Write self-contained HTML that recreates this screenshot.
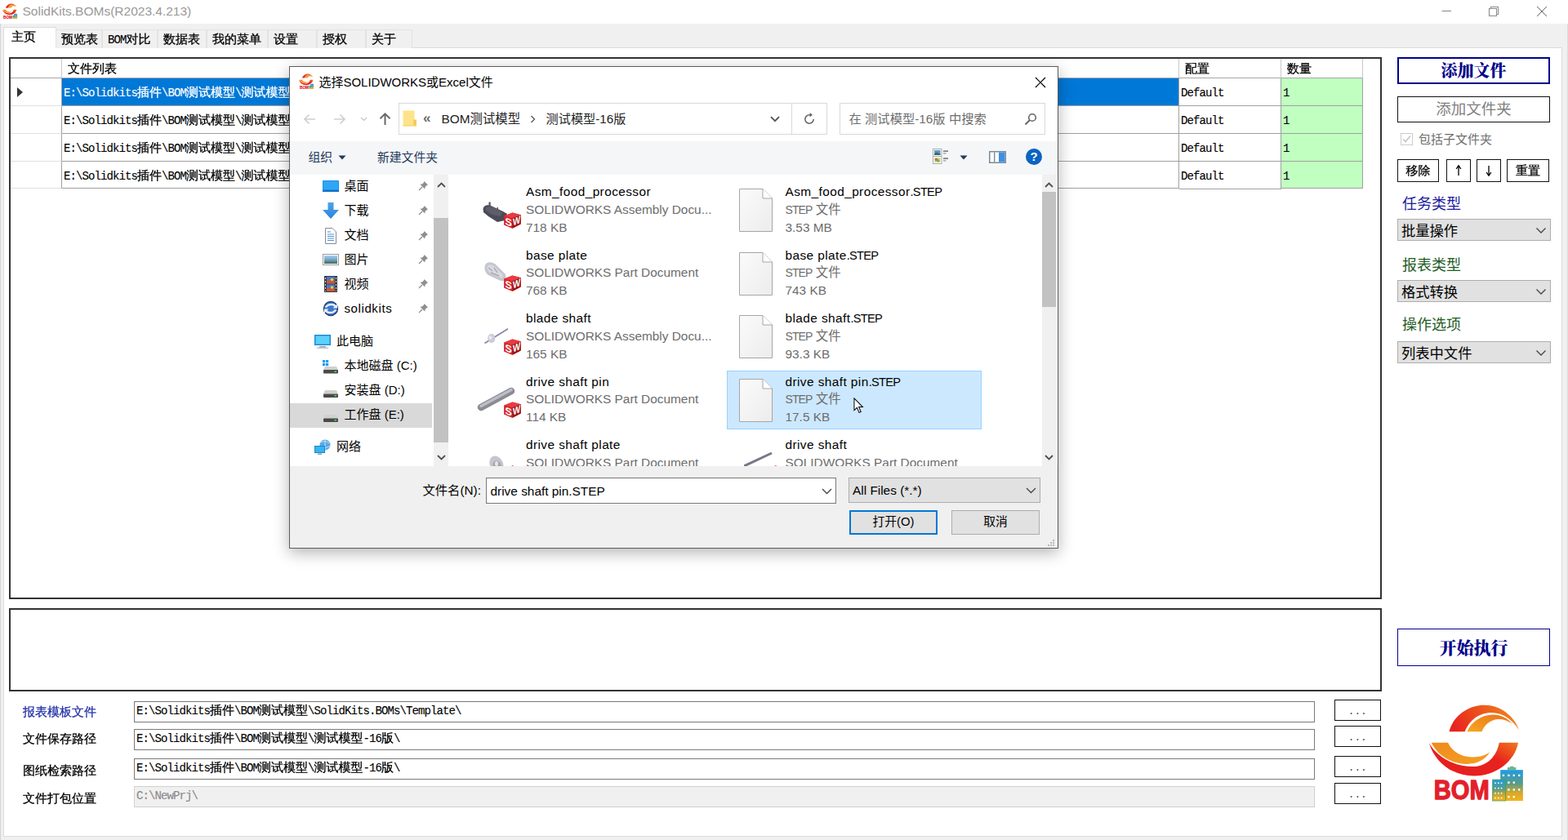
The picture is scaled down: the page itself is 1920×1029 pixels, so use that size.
<!DOCTYPE html>
<html lang="zh-CN">
<head>
<meta charset="utf-8">
<title>SolidKits.BOMs(R2023.4.213)</title>
<style>
*{box-sizing:border-box;margin:0;padding:0}
html,body{width:1920px;height:1029px;overflow:hidden;background:#f0f0f0}
body{position:relative;font-family:"Liberation Sans","Noto Sans CJK SC",sans-serif;font-size:16px;color:#000}
.abs{position:absolute}
.sim{font-family:"Liberation Mono","WenQuanYi Zen Hei","Noto Sans CJK SC",monospace;font-size:15px;white-space:nowrap;-webkit-text-stroke:0.3px currentColor}
.sim b{-webkit-text-stroke:0.12px currentColor;font-weight:normal;font-size:14px;letter-spacing:-0.9px;font-family:"Liberation Mono",monospace}
.ui{font-family:"Liberation Sans","Noto Sans CJK SC",sans-serif}
/* title bar */
#titlebar{left:0;top:0;width:1920px;height:29px;background:#fff}
#title{left:27.5px;top:5px;font-size:15.5px;line-height:18px;color:#999;white-space:nowrap}
/* tabs */
.tab{top:36px;height:23px;background:#f0f0f0;border:1px solid #e3e3e3;border-bottom:none;font-size:15px;line-height:25px;padding-left:6px;white-space:nowrap;overflow:hidden}
#tabpage{left:4px;top:58px;width:1909px;height:967px;background:#fff;border:1px solid #dcdcdc}
#tab0{left:4px;top:33px;width:65px;height:26px;background:#fff;border:1px solid #dcdcdc;border-bottom:none;font-size:15px;line-height:26px;padding-left:9px;overflow:hidden}
/* grid */
.panel{border:2px solid #333;background:#fff}
.gh{top:72px;height:24px;background:#fff;border-right:1px solid #c8c8c8;border-bottom:1px solid #a6a6a6;font-size:15px;line-height:27px;padding-left:7px;overflow:hidden}
.cell{height:34px;border-right:1px solid #a0a0a0;border-bottom:1px solid #a0a0a0;line-height:36px;padding-left:2px;overflow:hidden}
.btn{border:1px solid #111;background:#fff;text-align:center;white-space:nowrap}
.combo{left:1711px;width:188px;height:27px;background:#e1e1e1;border:1px solid #adadad;font-size:17.3px;line-height:28px;padding-left:4px;overflow:hidden}
.combo svg{position:absolute;right:4px;top:9px}
.lbl{font-size:18px;white-space:nowrap}
.pathlbl{left:28px;font-size:15px;white-space:nowrap}
.pathin{left:164px;width:1446px;height:26px;border:1px solid #7a7a7a;background:#fff;line-height:22px;padding-left:2px}
.dots{left:1634px;width:57px;height:26px;border:1px solid #111;background:#fff;text-align:center;font-size:12px;line-height:28px;letter-spacing:0.5px;color:#444;-webkit-text-stroke:0}

/* dialog */
#dlg{left:354px;top:81px;width:942px;height:591px;background:#fff;border:1px solid #5c5c5c;box-shadow:0 5px 18px 0 rgba(0,0,0,.30);font-family:"Liberation Sans","Noto Sans CJK SC",sans-serif;font-size:15px;color:#000}
#dlg .t{position:absolute;white-space:nowrap;line-height:20px}
#dlg .nv{position:absolute;left:66px;white-space:nowrap;line-height:20px;font-size:15px}
#dlg .fn{position:absolute;white-space:nowrap;line-height:20px;font-size:15.4px;color:#000}
#dlg .fd{position:absolute;white-space:nowrap;line-height:20px;font-size:15.4px;color:#6d6d6d}
.pin{position:absolute;left:157px}
#dlg .ext{letter-spacing:-.7px;font-size:14.6px}
#dlg .stp{letter-spacing:-.9px;font-size:14px}
</style>
</head>
<body>
<!-- ===== main window ===== -->
<div id="titlebar" class="abs"></div>
<div class="abs" style="left:0;top:29px;width:1px;height:1000px;background:#d4d4d4"></div><div class="abs" style="left:1919px;top:29px;width:1px;height:1000px;background:#dcdcdc"></div>
<div id="title" class="abs ui">SolidKits.BOMs(R2023.4.213)</div>
<div id="tabpage" class="abs"></div>
<div id="tab0" class="abs sim">主页</div>
<div class="abs tab sim" style="left:68px;width:57px">预览表</div>
<div class="abs tab sim" style="left:125px;width:68px"><b>BOM</b>对比</div>
<div class="abs tab sim" style="left:193px;width:60px">数据表</div>
<div class="abs tab sim" style="left:253px;width:75px">我的菜单</div>
<div class="abs tab sim" style="left:328px;width:60px">设置</div>
<div class="abs tab sim" style="left:388px;width:60px">授权</div>
<div class="abs tab sim" style="left:448px;width:57px">关于</div>


<!-- window controls -->
<svg class="abs" style="left:1760px;top:4px" width="140" height="20" viewBox="0 0 140 20"><path d="M5.5 9.5 H17" stroke="#8c8c8c" stroke-width="1.1"/><path d="M63.5 6.5 H72.5 V15.5 H63.5 Z M65.5 6.5 V4.5 H74.5 V13.5 H72.5" fill="none" stroke="#8c8c8c" stroke-width="1.1"/><path d="M122 4 L134 16 M134 4 L122 16" stroke="#666" stroke-width="1"/></svg>
<!-- grid panel -->
<div class="abs panel" style="left:11px;top:70px;width:1681px;height:664px"></div>
<div class="abs gh" style="left:13px;width:63px"></div>
<div class="abs gh sim" style="left:76px;width:1368px">文件列表</div>
<div class="abs gh sim" style="left:1444px;width:125px">配置</div>
<div class="abs gh sim" style="left:1569px;width:100px">数量</div>
<div class="abs cell" style="left:13px;top:96px;width:63px;border-bottom-color:#e0e0e0;border-right-color:#a0a0a0"></div>
<div class="abs cell sim" style="left:76px;top:96px;width:1368px;background:#0078d7;color:#fff;"><b>E:\Solidkits</b>插件<b>\BOM</b>测试模型<b>\</b>测试模型</div>
<div class="abs cell sim" style="left:1444px;top:96px;width:125px"><b>Default</b></div>
<div class="abs cell sim" style="left:1569px;top:96px;width:100px;background:#c0ffc0"><b>1</b></div>
<div class="abs cell" style="left:13px;top:130px;width:63px;border-bottom-color:#e0e0e0;border-right-color:#a0a0a0"></div>
<div class="abs cell sim" style="left:76px;top:130px;width:1368px;"><b>E:\Solidkits</b>插件<b>\BOM</b>测试模型<b>\</b>测试模型</div>
<div class="abs cell sim" style="left:1444px;top:130px;width:125px"><b>Default</b></div>
<div class="abs cell sim" style="left:1569px;top:130px;width:100px;background:#c0ffc0"><b>1</b></div>
<div class="abs cell" style="left:13px;top:164px;width:63px;border-bottom-color:#e0e0e0;border-right-color:#a0a0a0"></div>
<div class="abs cell sim" style="left:76px;top:164px;width:1368px;"><b>E:\Solidkits</b>插件<b>\BOM</b>测试模型<b>\</b>测试模型</div>
<div class="abs cell sim" style="left:1444px;top:164px;width:125px"><b>Default</b></div>
<div class="abs cell sim" style="left:1569px;top:164px;width:100px;background:#c0ffc0"><b>1</b></div>
<div class="abs cell" style="left:13px;top:198px;width:63px;height:33px;border-bottom-color:#e0e0e0;border-right-color:#a0a0a0"></div>
<div class="abs cell sim" style="left:76px;top:198px;width:1368px;height:33px;"><b>E:\Solidkits</b>插件<b>\BOM</b>测试模型<b>\</b>测试模型</div>
<div class="abs cell sim" style="left:1444px;top:198px;width:125px"><b>Default</b></div>
<div class="abs cell sim" style="left:1569px;top:198px;width:100px;height:33px;background:#c0ffc0"><b>1</b></div>
<div class="abs" style="left:21px;top:107px;width:0;height:0;border-left:7px solid #333;border-top:6px solid transparent;border-bottom:6px solid transparent"></div>

<!-- log panel -->
<div class="abs panel" style="left:11px;top:745px;width:1681px;height:102px"></div>


<!-- LOGO START -->
<svg width="0" height="0" style="position:absolute">
 <defs>
  <linearGradient id="lg1" x1="0" y1="0.5" x2="1" y2="0.3"><stop offset="0" stop-color="#e8231f"/><stop offset="0.55" stop-color="#ee5a1c"/><stop offset="1" stop-color="#f08a20"/></linearGradient>
  <linearGradient id="lg2" x1="0" y1="1" x2="1" y2="0"><stop offset="0" stop-color="#f6a821"/><stop offset="1" stop-color="#ec6f1b"/></linearGradient>
  <linearGradient id="lg3" x1="0" y1="0.6" x2="1" y2="0"><stop offset="0" stop-color="#e61f1f"/><stop offset="0.6" stop-color="#e8221d"/><stop offset="1" stop-color="#ef7a1e"/></linearGradient>
  <linearGradient id="lg4" x1="0" y1="0" x2="1" y2="1"><stop offset="0" stop-color="#f08a1e"/><stop offset="1" stop-color="#f4a022"/></linearGradient>
  <linearGradient id="lg5" x1="0" y1="0" x2="0" y2="1"><stop offset="0" stop-color="#1f9be6"/><stop offset="0.45" stop-color="#5b9c86"/><stop offset="0.75" stop-color="#d8a92a"/><stop offset="1" stop-color="#f6b21b"/></linearGradient>
  <symbol id="logo" viewBox="95 90 800 815">
   <path d="M270 318 C300 190,430 95,565 95 C700 95,815 185,858 305 C800 215,720 158,625 158 C520 158,435 225,402 318 Z" fill="url(#lg1)"/>
   <path d="M420 318 C455 235,540 175,640 175 C705 175,760 205,800 250 C755 222,715 212,680 214 C610 220,565 265,545 318 Z" fill="url(#lg2)"/>
   <path d="M850 410 C820 570,660 690,480 690 C300 690,150 580,100 410 C160 520,300 612,470 612 C590 612,672 520,690 410 Z" fill="url(#lg3)"/>
   <path d="M120 410 H260 C290 480,370 532,470 532 C530 532,580 515,612 490 C570 560,500 590,420 590 C290 590,175 520,120 410 Z" fill="url(#lg4)"/>
   <text x="142" y="888" font-family="Liberation Sans,sans-serif" font-weight="bold" font-size="228" fill="#e3202a" stroke="#e3202a" stroke-width="9" stroke-linejoin="round" textLength="466" lengthAdjust="spacingAndGlyphs">BOM</text>
   <path d="M760 640 V618 H782 V610 H812 V618 H832 V640 Z" fill="#6fb58c"/>
   <rect x="700" y="640" width="190" height="260" fill="url(#lg5)"/>
   <rect x="635" y="722" width="110" height="178" fill="url(#lg5)" stroke="#3fa05a" stroke-width="6"/>
   <g fill="#fff">
    <rect x="718" y="678" width="16" height="16"/><rect x="762" y="678" width="16" height="16"/><rect x="806" y="678" width="16" height="16"/><rect x="850" y="678" width="16" height="16"/>
    <rect x="762" y="738" width="16" height="16"/><rect x="806" y="738" width="16" height="16"/>
    <rect x="762" y="798" width="16" height="16"/><rect x="806" y="798" width="16" height="16"/><rect x="850" y="798" width="16" height="16"/>
    <rect x="762" y="858" width="16" height="16"/><rect x="806" y="858" width="16" height="16"/>
    <rect x="652" y="745" width="11" height="11"/><rect x="678" y="745" width="11" height="11"/><rect x="704" y="745" width="11" height="11"/>
    <rect x="652" y="788" width="11" height="11"/><rect x="678" y="788" width="11" height="11"/><rect x="704" y="788" width="11" height="11"/>
    <rect x="652" y="830" width="11" height="11"/><rect x="678" y="830" width="11" height="11"/><rect x="704" y="830" width="11" height="11"/>
    <rect x="652" y="870" width="11" height="11"/><rect x="678" y="870" width="11" height="11"/><rect x="704" y="870" width="11" height="11"/>
   </g>
  </symbol>
 </defs>
</svg>
<svg class="abs" style="left:1748.8px;top:863.1px" width="116.6" height="118.8"><use href="#logo"/></svg>
<svg class="abs" style="left:3px;top:3.8px" width="18.5" height="19.6"><use href="#logo"/></svg>
<!-- LOGO END -->
<!-- right panel -->
<div class="abs btn" style="left:1711px;top:70px;width:187px;height:33px;border:2px solid #00008b;color:#00008b;font-family:'Liberation Serif','Noto Serif CJK SC',serif;font-weight:900;font-size:20px;line-height:31px;letter-spacing:0px">添加文件</div>
<div class="abs btn ui" style="left:1711px;top:118px;width:187px;height:32px;color:#7f7f7f;font-size:18.5px;line-height:30px">添加文件夹</div>
<div class="abs" style="left:1715px;top:163px;width:15px;height:15px;border:1px solid #ccc;background:#fff"></div>
<svg class="abs" style="left:1715px;top:163px" width="15" height="15" viewBox="0 0 15 15"><path d="M3 7.5 L6 10.5 L12 3.5" fill="none" stroke="#c4c4c4" stroke-width="1.6"/></svg>
<div class="abs ui" style="left:1737px;top:160.7px;font-size:15px;line-height:20px;color:#6d6d6d;white-space:nowrap">包括子文件夹</div>
<div class="abs btn sim" style="left:1711px;top:195px;width:51px;height:28px;line-height:29px;font-weight:bold">移除</div>
<div class="abs btn sim" style="left:1771px;top:195px;width:30px;height:28px;line-height:25px"></div>
<div class="abs btn sim" style="left:1808px;top:195px;width:30px;height:28px;line-height:25px"></div>
<svg class="abs" style="left:1771px;top:195px" width="30" height="28" viewBox="0 0 30 28"><path d="M15 8 V20 M15 7.5 L12.2 12 M15 7.5 L17.8 12" stroke="#000" stroke-width="1.3" fill="none"/></svg>
<svg class="abs" style="left:1808px;top:195px" width="30" height="28" viewBox="0 0 30 28"><path d="M15 8 V20 M15 20.5 L12.2 16 M15 20.5 L17.8 16" stroke="#000" stroke-width="1.3" fill="none"/></svg>
<div class="abs btn sim" style="left:1845px;top:195px;width:52px;height:28px;line-height:29px;font-weight:bold">重置</div>

<div class="abs lbl ui" style="left:1717px;top:238px;line-height:24px;color:#1c1c9c">任务类型</div>
<div class="abs combo ui" style="top:268px">批量操作<svg width="14" height="9" viewBox="0 0 14 9"><path d="M1.5 1.5 L7 7 L12.5 1.5" fill="none" stroke="#444" stroke-width="1.3"/></svg></div>
<div class="abs lbl ui" style="left:1717px;top:313px;line-height:24px;color:#1f5c1f">报表类型</div>
<div class="abs combo ui" style="top:343px">格式转换<svg width="14" height="9" viewBox="0 0 14 9"><path d="M1.5 1.5 L7 7 L12.5 1.5" fill="none" stroke="#444" stroke-width="1.3"/></svg></div>
<div class="abs lbl ui" style="left:1717px;top:386px;line-height:24px;color:#1f5c1f">操作选项</div>
<div class="abs combo ui" style="top:418px">列表中文件<svg width="14" height="9" viewBox="0 0 14 9"><path d="M1.5 1.5 L7 7 L12.5 1.5" fill="none" stroke="#444" stroke-width="1.3"/></svg></div>

<div class="abs btn" style="left:1711px;top:770px;width:187px;height:46px;border:1px solid #00008b;color:#00008b;font-family:'Liberation Serif','Noto Serif CJK SC',serif;font-weight:900;font-size:21px;line-height:46px">开始执行</div>

<!-- path rows -->
<div class="abs pathlbl sim" style="top:862.5px;color:#2232a8">报表模板文件</div>
<div class="abs pathlbl sim" style="top:896px">文件保存路径</div>
<div class="abs pathlbl sim" style="top:935px">图纸检索路径</div>
<div class="abs pathlbl sim" style="top:969px">文件打包位置</div>
<div class="abs pathin sim" style="top:859px"><b>E:\Solidkits</b>插件<b>\BOM</b>测试模型<b>\SolidKits.BOMs\Template\</b></div>
<div class="abs pathin sim" style="top:893px"><b>E:\Solidkits</b>插件<b>\BOM</b>测试模型<b>\</b>测试模型<b>-16</b>版<b>\</b></div>
<div class="abs pathin sim" style="top:929px"><b>E:\Solidkits</b>插件<b>\BOM</b>测试模型<b>\</b>测试模型<b>-16</b>版<b>\</b></div>
<div class="abs pathin sim" style="top:963px;background:#f0f0f0;border-color:#d0d0d0;color:#8a8a8a"><b>C:\NewPrj\</b></div>
<div class="abs dots sim" style="top:857px">...</div>
<div class="abs dots sim" style="top:889px">...</div>
<div class="abs dots sim" style="top:926px">...</div>
<div class="abs dots sim" style="top:959px">...</div>

<!-- DIALOG START -->
<div id="dlg" class="abs">
 <!-- title -->
 <svg id="dicon" style="position:absolute;left:10.5px;top:7.5px" width="18.5" height="19.5"><use href="#logo"/></svg>
 <div class="t" style="left:35.4px;top:8.5px;font-size:15px">选择SOLIDWORKS或Excel文件</div>
 <svg style="position:absolute;left:912px;top:12px" width="14" height="14" viewBox="0 0 14 14"><path d="M1 1 L13 13 M13 1 L1 13" stroke="#000" stroke-width="1.2"/></svg>
 <!-- nav row -->
 <svg style="position:absolute;left:16px;top:56px" width="16" height="16" viewBox="0 0 16 16"><path d="M15 8 H2 M7.5 2.5 L2 8 L7.5 13.5" fill="none" stroke="#cfcfcf" stroke-width="1.7"/></svg>
 <svg style="position:absolute;left:53px;top:56px" width="16" height="16" viewBox="0 0 16 16"><path d="M1 8 H14 M8.5 2.5 L14 8 L8.5 13.5" fill="none" stroke="#cfcfcf" stroke-width="1.7"/></svg>
 <svg style="position:absolute;left:86px;top:61px" width="9" height="6" viewBox="0 0 9 6"><path d="M1 1 L4.5 4.5 L8 1" fill="none" stroke="#c4c4c4" stroke-width="1.2"/></svg>
 <svg style="position:absolute;left:108px;top:55px" width="17" height="17" viewBox="0 0 17 17"><path d="M8.5 16 V2.5 M2.5 8.3 L8.5 2.3 L14.5 8.3" fill="none" stroke="#6a6a6a" stroke-width="2"/></svg>
 <div style="position:absolute;left:133px;top:44px;width:525px;height:39px;border:1px solid #d9d9d9;background:#fff"></div>
 <div style="position:absolute;left:614px;top:45px;width:1px;height:37px;background:#d9d9d9"></div>
 <svg style="position:absolute;left:138px;top:53px" width="18" height="20" viewBox="0 0 18 20"><path d="M0.5 0.5 H14.5 V19.5 H0.5 Z" fill="#ffe38a"/><path d="M13 11.5 H17 V19.5 H13 Z" fill="#f3cc58"/><path d="M0.5 18 H17 V19.5 H0.5 Z" fill="#f7d66f"/></svg>
 <div class="t" style="left:163px;top:53px;font-size:17px;font-weight:bold;color:#6a6a6a">«</div>
 <div class="t" style="left:185.5px;top:53.5px;font-size:15.4px;color:#222">BOM测试模型</div>
 <svg style="position:absolute;left:294px;top:59px" width="7" height="10" viewBox="0 0 7 10"><path d="M1.5 1 L5.5 5 L1.5 9" fill="none" stroke="#555" stroke-width="1.3"/></svg>
 <div class="t" style="left:313.5px;top:53.5px;font-size:15.2px;color:#222">测试模型-16版</div>
 <svg style="position:absolute;left:588px;top:60px" width="12" height="8" viewBox="0 0 12 8"><path d="M1 1.2 L6 6.2 L11 1.2" fill="none" stroke="#555" stroke-width="1.9"/></svg>
 <svg style="position:absolute;left:628px;top:56px" width="16" height="16" viewBox="0 0 16 16"><path d="M13.2 8 A5.2 5.2 0 1 1 8 2.8 H10.5" fill="none" stroke="#666" stroke-width="1.6"/><path d="M8.6 0 L12 2.8 L8.6 5.6 Z" fill="#666"/></svg>
 <div style="position:absolute;left:673px;top:44px;width:252px;height:39px;border:1px solid #d9d9d9;background:#fff"></div>
 <div class="t" style="left:684.5px;top:54px;font-size:15.3px;color:#6d6d6d">在 测试模型-16版 中搜索</div>
 <svg style="position:absolute;left:899px;top:56px" width="16" height="16" viewBox="0 0 16 16"><circle cx="10" cy="6" r="4.3" fill="none" stroke="#666" stroke-width="1.6"/><path d="M7 9 L1.5 14.5" stroke="#666" stroke-width="1.9"/></svg>
 <!-- toolbar -->
 <div style="position:absolute;left:0;top:91px;width:940px;height:41px;background:#f5f6f7"></div>
 <div class="t" style="left:22.5px;top:101px;font-size:14.8px;color:#1e395b">组织</div>
 <svg style="position:absolute;left:59px;top:108px" width="10" height="6" viewBox="0 0 10 6"><path d="M0.5 0.5 H9.5 L5 5.5 Z" fill="#1e395b"/></svg>
 <div class="t" style="left:107px;top:101px;font-size:14.8px;color:#1e395b">新建文件夹</div>
 <svg style="position:absolute;left:787px;top:100px" width="20" height="19" viewBox="0 0 20 19"><rect x="0.5" y="0.5" width="10.5" height="18" fill="#fff" stroke="#ababab"/><path d="M0.5 9.5 H11" stroke="#ababab"/><rect x="2" y="2" width="7.5" height="6" fill="#5b9bd5"/><path d="M2 8 L2 6 L5 4.5 L9.5 6.5 V8 Z" fill="#3d6b5a"/><rect x="2" y="11" width="7.5" height="6" fill="#c9dca0"/><circle cx="4.5" cy="13.5" r="1.7" fill="#d9604a"/><circle cx="6.8" cy="14.8" r="1.7" fill="#7ab04a"/><path d="M13 3.2 H19 M13 12.2 H19" stroke="#555" stroke-width="1.2"/><path d="M13 5.8 H16.5 M13 14.8 H16.5" stroke="#9a9a9a" stroke-width="1.2"/></svg>
 <svg style="position:absolute;left:820px;top:108px" width="10" height="6" viewBox="0 0 10 6"><path d="M0.5 0.5 H9.5 L5 5.5 Z" fill="#1e395b"/></svg>
 <svg style="position:absolute;left:856px;top:103px" width="21" height="15" viewBox="0 0 21 15"><rect x="0.75" y="0.75" width="19.5" height="13.5" fill="#fff" stroke="#7c8a99" stroke-width="1.5"/><rect x="6" y="1.5" width="1.4" height="12" fill="#7c8a99"/><rect x="12" y="1.5" width="7.5" height="12" fill="#3f8fe0"/></svg>
 <div style="position:absolute;left:901px;top:100px;width:20px;height:20px;border-radius:10px;background:#0a64c2;color:#fff;font-weight:bold;font-size:15px;line-height:20px;text-align:center">?</div>
 <!-- nav pane -->
 <div style="position:absolute;left:40px;top:136.4px;width:20px;height:20px"><svg width="20" height="20" viewBox="0 0 20 20"><rect x="0" y="3" width="20" height="14" rx="1" fill="#1b8fe6"/><rect x="1" y="4" width="18" height="10" fill="#2fa6f5"/><rect x="0" y="15" width="20" height="2" fill="#1172c4"/></svg></div><div class="nv" style="left:66.5px;top:135.9px">桌面</div><svg class="pin" style="top:139.4px" width="13" height="13" viewBox="0 0 13 13"><path d="M7.5 1 L12 5.5 L10.6 6 L8.6 8 L8.2 10.6 L2.4 4.8 L5 4.4 L7 2.4 Z" fill="#8e8e8e"/><path d="M5 8 L1 12" stroke="#8e8e8e" stroke-width="1.3"/></svg><div style="position:absolute;left:40px;top:166.2px;width:20px;height:20px"><svg width="20" height="20" viewBox="0 0 20 20"><defs><linearGradient id="dlg1" x1="0" y1="0" x2="0" y2="1"><stop offset="0" stop-color="#4da3ee"/><stop offset="1" stop-color="#2a84d8"/></linearGradient></defs><path d="M6.5 0 H13.5 V9 H20 L10 20 L0 9 H6.5 Z" fill="url(#dlg1)"/></svg></div><div class="nv" style="left:66.5px;top:165.7px">下载</div><svg class="pin" style="top:169.2px" width="13" height="13" viewBox="0 0 13 13"><path d="M7.5 1 L12 5.5 L10.6 6 L8.6 8 L8.2 10.6 L2.4 4.8 L5 4.4 L7 2.4 Z" fill="#8e8e8e"/><path d="M5 8 L1 12" stroke="#8e8e8e" stroke-width="1.3"/></svg><div style="position:absolute;left:40px;top:196.5px;width:20px;height:20px"><svg width="20" height="20" viewBox="0 0 20 20"><path d="M3.5 0.5 H12 L16.5 5 V19.5 H3.5 Z" fill="#fff" stroke="#8a8a8a"/><path d="M6 5 H10 M6 8 H14 M6 10.5 H14 M6 13 H14 M6 15.5 H14" stroke="#4a90d9" stroke-width="1.2"/></svg></div><div class="nv" style="left:66.5px;top:196.0px">文档</div><svg class="pin" style="top:199.5px" width="13" height="13" viewBox="0 0 13 13"><path d="M7.5 1 L12 5.5 L10.6 6 L8.6 8 L8.2 10.6 L2.4 4.8 L5 4.4 L7 2.4 Z" fill="#8e8e8e"/><path d="M5 8 L1 12" stroke="#8e8e8e" stroke-width="1.3"/></svg><div style="position:absolute;left:40px;top:226.2px;width:20px;height:20px"><svg width="20" height="20" viewBox="0 0 20 20"><defs><linearGradient id="pic1" x1="0" y1="0" x2="0" y2="1"><stop offset="0" stop-color="#a9d0f0"/><stop offset="0.55" stop-color="#6fa0c0"/><stop offset="1" stop-color="#3f6a4a"/></linearGradient></defs><rect x="0.5" y="3.5" width="19" height="13" fill="#fff" stroke="#9a9a9a"/><rect x="2" y="5" width="16" height="10" fill="url(#pic1)"/></svg></div><div class="nv" style="left:66.5px;top:225.7px">图片</div><svg class="pin" style="top:229.2px" width="13" height="13" viewBox="0 0 13 13"><path d="M7.5 1 L12 5.5 L10.6 6 L8.6 8 L8.2 10.6 L2.4 4.8 L5 4.4 L7 2.4 Z" fill="#8e8e8e"/><path d="M5 8 L1 12" stroke="#8e8e8e" stroke-width="1.3"/></svg><div style="position:absolute;left:40px;top:256.2px;width:20px;height:20px"><svg width="20" height="20" viewBox="0 0 20 20"><rect x="2" y="0" width="16" height="20" fill="#3a3a3a"/><rect x="5" y="1" width="10" height="8.5" fill="#4a78c8"/><rect x="5" y="5.5" width="10" height="4" fill="#c65a3a"/><circle cx="11.5" cy="4.5" r="1.8" fill="#e8c84a"/><rect x="5" y="10.5" width="10" height="8.5" fill="#4a78c8"/><rect x="5" y="15" width="10" height="4" fill="#c65a3a"/><circle cx="11.5" cy="14" r="1.8" fill="#e8c84a"/><path d="M3.5 2 V19" stroke="#ddd" stroke-width="1" stroke-dasharray="2 2"/><path d="M16.5 2 V19" stroke="#ddd" stroke-width="1" stroke-dasharray="2 2"/></svg></div><div class="nv" style="left:66.5px;top:255.7px">视频</div><svg class="pin" style="top:259.2px" width="13" height="13" viewBox="0 0 13 13"><path d="M7.5 1 L12 5.5 L10.6 6 L8.6 8 L8.2 10.6 L2.4 4.8 L5 4.4 L7 2.4 Z" fill="#8e8e8e"/><path d="M5 8 L1 12" stroke="#8e8e8e" stroke-width="1.3"/></svg><div style="position:absolute;left:40px;top:286.3px;width:20px;height:20px"><svg width="20" height="20" viewBox="0 0 20 20"><circle cx="10" cy="10" r="8.5" fill="#3a78d0" stroke="#2b3f6b" stroke-width="1.4"/><path d="M2.5 8 C6 3,13 2.5,16.5 6 L18 4 V9.5 H12.5 L14.5 7.5 C12 5.5,7 5.5,5 9 Z" fill="#e8eef8"/><path d="M17.5 12 C14 17,7 17.5,3.5 14 L2 16 V10.5 H7.5 L5.5 12.5 C8 14.5,13 14.5,15 11 Z" fill="#e8eef8"/></svg></div><div class="nv" style="left:66.5px;top:285.8px"><span style="letter-spacing:.6px">solidkits</span></div><svg class="pin" style="top:289.3px" width="13" height="13" viewBox="0 0 13 13"><path d="M7.5 1 L12 5.5 L10.6 6 L8.6 8 L8.2 10.6 L2.4 4.8 L5 4.4 L7 2.4 Z" fill="#8e8e8e"/><path d="M5 8 L1 12" stroke="#8e8e8e" stroke-width="1.3"/></svg><div style="position:absolute;left:30px;top:326.4px;width:20px;height:20px"><svg width="20" height="20" viewBox="0 0 20 20"><rect x="0.5" y="2.5" width="19" height="12" fill="#35b5f2" stroke="#1c86c8"/><rect x="2" y="4" width="16" height="9" fill="#5cd0fb"/><rect x="6" y="16" width="8" height="1.6" fill="#8aa0b0"/><rect x="3" y="17.6" width="14" height="1.4" fill="#b8c4cc"/></svg></div><div class="nv" style="left:57px;top:325.9px">此电脑</div><div style="position:absolute;left:40px;top:356.6px;width:20px;height:20px"><svg width="20" height="20" viewBox="0 0 20 20"><rect x="0" y="2" width="3.2" height="3.2" fill="#1e9bf0"/><rect x="4" y="2" width="3.2" height="3.2" fill="#1e9bf0"/><rect x="0" y="6" width="3.2" height="3.2" fill="#1e9bf0"/><rect x="4" y="6" width="3.2" height="3.2" fill="#1e9bf0"/><path d="M3 10 H17 L19 14 H1 Z" fill="#d0d0d0"/><rect x="1" y="14" width="18" height="4.5" rx="1" fill="#4a4a4a"/><rect x="14.5" y="15.5" width="2.5" height="1.5" fill="#4fe04f"/></svg></div><div class="nv" style="left:66.5px;top:356.1px">本地磁盘 (C:)</div><div style="position:absolute;left:40px;top:386.6px;width:20px;height:20px"><svg width="20" height="20" viewBox="0 0 20 20"><path d="M3 9 H17 L19 13.5 H1 Z" fill="#d0d0d0"/><rect x="1" y="13.5" width="18" height="4.5" rx="1" fill="#4a4a4a"/><rect x="14.5" y="15" width="2.5" height="1.5" fill="#4fe04f"/></svg></div><div class="nv" style="left:66.5px;top:386.1px">安装盘 (D:)</div><div style="position:absolute;left:0;top:411.6px;width:174px;height:30px;background:#d9d9d9"></div><div style="position:absolute;left:40px;top:416.6px;width:20px;height:20px"><svg width="20" height="20" viewBox="0 0 20 20"><path d="M3 9 H17 L19 13.5 H1 Z" fill="#d0d0d0"/><rect x="1" y="13.5" width="18" height="4.5" rx="1" fill="#4a4a4a"/><rect x="14.5" y="15" width="2.5" height="1.5" fill="#4fe04f"/></svg></div><div class="nv" style="left:66.5px;top:416.1px">工作盘 (E:)</div><div style="position:absolute;left:30px;top:455.8px;width:20px;height:20px"><svg width="20" height="20" viewBox="0 0 20 20"><circle cx="13" cy="7" r="6.5" fill="#5aa7e6"/><path d="M8 4 C11 2,15 2,18 5 M7 9 C10 11,16 11,19 8 M13 0.5 V13.5" stroke="#c9e4f9" stroke-width="1" fill="none"/><rect x="0.5" y="8.5" width="12" height="8" fill="#35b5f2" stroke="#1c86c8"/><rect x="4" y="17.5" width="5" height="1.5" fill="#8aa0b0"/></svg></div><div class="nv" style="left:57px;top:455.3px">网络</div>
 <div style="position:absolute;left:176px;top:132px;width:18px;height:357px;background:#f0f0f0"></div>
 <div style="position:absolute;left:176px;top:185px;width:18px;height:275px;background:#c2c2c2"></div>
 <div style="position:absolute;left:179.5px;top:134px"><svg width="11" height="7" viewBox="0 0 11 7"><path d="M1 6 L5.5 1.5 L10 6" fill="none" stroke="#505050" stroke-width="1.8"/></svg></div>
 <div style="position:absolute;left:179.5px;top:468px"><svg width="11" height="7" viewBox="0 0 11 7"><path d="M1 1 L5.5 5.5 L10 1" fill="none" stroke="#505050" stroke-width="1.8"/></svg></div>
 <!-- file list -->
 <div style="position:absolute;left:0;top:132px;width:921px;height:357px;overflow:hidden;pointer-events:none"><div style="position:absolute;left:234px;top:28.7px;width:50px;height:50px"><svg style="position:absolute;left:0;top:0;overflow:visible" width="50" height="50" viewBox="0 0 50 50"><path d="M2.5 13 C3 9,7 7.5,11 8.5 L27 16 L32 19 L29 27 L20 29 L9 22 L3 17 Z" fill="#4b4c57"/><path d="M6 11.5 C9 9.5,13 10,17 12 L26 17 L24 22 L14 20 L6 15 Z" fill="#5d5e6a"/><rect x="9.5" y="4.5" width="2.2" height="6" fill="#55565f"/><rect x="19.5" y="11" width="1.5" height="4" fill="#55565f"/></svg><svg style="position:absolute;left:28.3px;top:17.2px" width="21" height="20" viewBox="0 0 21 20"><path d="M0.3 4.6 L10.5 0.4 L20.7 3.2 L20.7 14.6 L10.5 19.7 L0.3 15.6 Z" fill="#c81e25"/><path d="M0.3 4.6 L10.5 0.4 L20.7 3.2 L10.5 7.6 Z" fill="#ea3b3f"/><path d="M0.3 4.6 L10.5 7.6 V19.7 L0.3 15.6 Z" fill="#dc262c"/><path d="M10.5 7.6 L20.7 3.2 V14.6 L10.5 19.7 Z" fill="#9c1217"/><text x="1.6" y="16.6" font-family="Liberation Sans,sans-serif" font-weight="bold" font-size="12.5" fill="#fff" transform="skewY(18) translate(0,-2.2)">S</text><text x="11" y="22.6" font-family="Liberation Sans,sans-serif" font-weight="bold" font-size="12.5" fill="#fff" textLength="9.2" lengthAdjust="spacingAndGlyphs" transform="skewY(-24) translate(0,-1)">W</text></svg></div><div class="fn" style="left:289px;top:11.0px;letter-spacing:.42px">Asm_food_processor</div><div class="fd" style="left:289px;top:32.5px">SOLIDWORKS Assembly Docu...</div><div class="fd" style="left:289px;top:54.5px">718 KB</div><div style="position:absolute;left:234px;top:106.3px;width:50px;height:50px"><svg style="position:absolute;left:0;top:0;overflow:visible" width="50" height="50" viewBox="0 0 50 50"><path d="M5 5 C7 0,14 0,19 5 L30 16 L31 24 L24 24 L9 17 C5 14,3.5 9,5 5 Z" fill="#c5c6cf"/><path d="M8 6 C10 3,14 4,17 7 L27 17 L26 21 L12 15 C8 12,7 9,8 6 Z" fill="#d8d9e0"/><path d="M9 8 L14 12 M16 8 L20 14 M12 14 L22 18" stroke="#8d8e99" stroke-width="1"/></svg><svg style="position:absolute;left:28.3px;top:17.2px" width="21" height="20" viewBox="0 0 21 20"><path d="M0.3 4.6 L10.5 0.4 L20.7 3.2 L20.7 14.6 L10.5 19.7 L0.3 15.6 Z" fill="#c81e25"/><path d="M0.3 4.6 L10.5 0.4 L20.7 3.2 L10.5 7.6 Z" fill="#ea3b3f"/><path d="M0.3 4.6 L10.5 7.6 V19.7 L0.3 15.6 Z" fill="#dc262c"/><path d="M10.5 7.6 L20.7 3.2 V14.6 L10.5 19.7 Z" fill="#9c1217"/><text x="1.6" y="16.6" font-family="Liberation Sans,sans-serif" font-weight="bold" font-size="12.5" fill="#fff" transform="skewY(18) translate(0,-2.2)">S</text><text x="11" y="22.6" font-family="Liberation Sans,sans-serif" font-weight="bold" font-size="12.5" fill="#fff" textLength="9.2" lengthAdjust="spacingAndGlyphs" transform="skewY(-24) translate(0,-1)">W</text></svg></div><div class="fn" style="left:289px;top:88.6px;letter-spacing:.42px">base plate</div><div class="fd" style="left:289px;top:110.1px">SOLIDWORKS Part Document</div><div class="fd" style="left:289px;top:132.1px">768 KB</div><div style="position:absolute;left:234px;top:183.9px;width:50px;height:50px"><svg style="position:absolute;left:0;top:0;overflow:visible" width="50" height="50" viewBox="0 0 50 50"><path d="M4.5 22.6 L33 4.7" stroke="#8687a8" stroke-width="1.8"/><ellipse cx="12.8" cy="16.4" rx="4.6" ry="5.6" fill="#c9cadb"/><ellipse cx="11.5" cy="15.5" rx="2" ry="2.6" fill="#e9e9f2"/></svg><svg style="position:absolute;left:28.3px;top:17.2px" width="21" height="20" viewBox="0 0 21 20"><path d="M0.3 4.6 L10.5 0.4 L20.7 3.2 L20.7 14.6 L10.5 19.7 L0.3 15.6 Z" fill="#c81e25"/><path d="M0.3 4.6 L10.5 0.4 L20.7 3.2 L10.5 7.6 Z" fill="#ea3b3f"/><path d="M0.3 4.6 L10.5 7.6 V19.7 L0.3 15.6 Z" fill="#dc262c"/><path d="M10.5 7.6 L20.7 3.2 V14.6 L10.5 19.7 Z" fill="#9c1217"/><text x="1.6" y="16.6" font-family="Liberation Sans,sans-serif" font-weight="bold" font-size="12.5" fill="#fff" transform="skewY(18) translate(0,-2.2)">S</text><text x="11" y="22.6" font-family="Liberation Sans,sans-serif" font-weight="bold" font-size="12.5" fill="#fff" textLength="9.2" lengthAdjust="spacingAndGlyphs" transform="skewY(-24) translate(0,-1)">W</text></svg></div><div class="fn" style="left:289px;top:166.2px;letter-spacing:.42px">blade shaft</div><div class="fd" style="left:289px;top:187.7px">SOLIDWORKS Assembly Docu...</div><div class="fd" style="left:289px;top:209.7px">165 KB</div><div style="position:absolute;left:234px;top:261.2px;width:50px;height:50px"><svg style="position:absolute;left:0;top:0;overflow:visible" width="50" height="50" viewBox="0 0 50 50"><path d="M0 24 L37 4" stroke="#8a8b93" stroke-width="8.5" stroke-linecap="round"/><path d="M0 22.5 L37 2.5" stroke="#bcbdc6" stroke-width="3.5" stroke-linecap="round"/></svg><svg style="position:absolute;left:28.3px;top:17.2px" width="21" height="20" viewBox="0 0 21 20"><path d="M0.3 4.6 L10.5 0.4 L20.7 3.2 L20.7 14.6 L10.5 19.7 L0.3 15.6 Z" fill="#c81e25"/><path d="M0.3 4.6 L10.5 0.4 L20.7 3.2 L10.5 7.6 Z" fill="#ea3b3f"/><path d="M0.3 4.6 L10.5 7.6 V19.7 L0.3 15.6 Z" fill="#dc262c"/><path d="M10.5 7.6 L20.7 3.2 V14.6 L10.5 19.7 Z" fill="#9c1217"/><text x="1.6" y="16.6" font-family="Liberation Sans,sans-serif" font-weight="bold" font-size="12.5" fill="#fff" transform="skewY(18) translate(0,-2.2)">S</text><text x="11" y="22.6" font-family="Liberation Sans,sans-serif" font-weight="bold" font-size="12.5" fill="#fff" textLength="9.2" lengthAdjust="spacingAndGlyphs" transform="skewY(-24) translate(0,-1)">W</text></svg></div><div class="fn" style="left:289px;top:243.5px;letter-spacing:.42px">drive shaft pin</div><div class="fd" style="left:289px;top:265.0px">SOLIDWORKS Part Document</div><div class="fd" style="left:289px;top:287.0px">114 KB</div><div style="position:absolute;left:234px;top:338.8px;width:50px;height:50px"><svg style="position:absolute;left:0;top:0;overflow:visible" width="50" height="50" viewBox="0 0 50 50"><ellipse cx="19" cy="16" rx="8" ry="11" transform="rotate(-25 19 16)" fill="#c5c6cf"/><ellipse cx="20" cy="18" rx="5" ry="7" transform="rotate(-25 20 18)" fill="#a5a6b0"/><ellipse cx="19" cy="15" rx="2" ry="3" fill="#e6e6ec"/></svg><svg style="position:absolute;left:28.3px;top:17.2px" width="21" height="20" viewBox="0 0 21 20"><path d="M0.3 4.6 L10.5 0.4 L20.7 3.2 L20.7 14.6 L10.5 19.7 L0.3 15.6 Z" fill="#c81e25"/><path d="M0.3 4.6 L10.5 0.4 L20.7 3.2 L10.5 7.6 Z" fill="#ea3b3f"/><path d="M0.3 4.6 L10.5 7.6 V19.7 L0.3 15.6 Z" fill="#dc262c"/><path d="M10.5 7.6 L20.7 3.2 V14.6 L10.5 19.7 Z" fill="#9c1217"/><text x="1.6" y="16.6" font-family="Liberation Sans,sans-serif" font-weight="bold" font-size="12.5" fill="#fff" transform="skewY(18) translate(0,-2.2)">S</text><text x="11" y="22.6" font-family="Liberation Sans,sans-serif" font-weight="bold" font-size="12.5" fill="#fff" textLength="9.2" lengthAdjust="spacingAndGlyphs" transform="skewY(-24) translate(0,-1)">W</text></svg></div><div class="fn" style="left:289px;top:321.1px;letter-spacing:.42px">drive shaft plate</div><div class="fd" style="left:289px;top:342.6px">SOLIDWORKS Part Document</div><div style="position:absolute;left:550px;top:17.2px;width:41px;height:53px"><svg style="position:absolute;left:0;top:0" width="41" height="53" viewBox="0 0 41 53"><defs><linearGradient id="pg" x1="0" y1="0" x2="1" y2="1"><stop offset="0" stop-color="#fbfbfb"/><stop offset="1" stop-color="#ececec"/></linearGradient></defs><path d="M0.5 0.5 H29 L40.5 12 V52.5 H0.5 Z" fill="url(#pg)" stroke="#a6a6a6"/><path d="M29 0.5 V12 H40.5" fill="#fff" stroke="#a6a6a6"/></svg></div><div class="fn" style="left:606.5px;top:11.0px;letter-spacing:.42px">Asm_food_processor<span class="ext">.STEP</span></div><div class="fd" style="left:606.5px;top:32.5px"><span class="stp">STEP</span> 文件</div><div class="fd" style="left:606.5px;top:54.5px">3.53 MB</div><div style="position:absolute;left:550px;top:94.8px;width:41px;height:53px"><svg style="position:absolute;left:0;top:0" width="41" height="53" viewBox="0 0 41 53"><path d="M0.5 0.5 H29 L40.5 12 V52.5 H0.5 Z" fill="url(#pg)" stroke="#a6a6a6"/><path d="M29 0.5 V12 H40.5" fill="#fff" stroke="#a6a6a6"/></svg></div><div class="fn" style="left:606.5px;top:88.6px;letter-spacing:.42px">base plate<span class="ext">.STEP</span></div><div class="fd" style="left:606.5px;top:110.1px"><span class="stp">STEP</span> 文件</div><div class="fd" style="left:606.5px;top:132.1px">743 KB</div><div style="position:absolute;left:550px;top:172.4px;width:41px;height:53px"><svg style="position:absolute;left:0;top:0" width="41" height="53" viewBox="0 0 41 53"><path d="M0.5 0.5 H29 L40.5 12 V52.5 H0.5 Z" fill="url(#pg)" stroke="#a6a6a6"/><path d="M29 0.5 V12 H40.5" fill="#fff" stroke="#a6a6a6"/></svg></div><div class="fn" style="left:606.5px;top:166.2px;letter-spacing:.42px">blade shaft<span class="ext">.STEP</span></div><div class="fd" style="left:606.5px;top:187.7px"><span class="stp">STEP</span> 文件</div><div class="fd" style="left:606.5px;top:209.7px">93.3 KB</div><div style="position:absolute;left:535px;top:239.6px;width:312px;height:72px;background:#cce8ff;border:1px solid #99d1ff"></div><div style="position:absolute;left:550px;top:249.7px;width:41px;height:53px"><svg style="position:absolute;left:0;top:0" width="41" height="53" viewBox="0 0 41 53"><path d="M0.5 0.5 H29 L40.5 12 V52.5 H0.5 Z" fill="url(#pg)" stroke="#a6a6a6"/><path d="M29 0.5 V12 H40.5" fill="#fff" stroke="#a6a6a6"/></svg></div><div class="fn" style="left:606.5px;top:243.5px;letter-spacing:.42px">drive shaft pin<span class="ext">.STEP</span></div><div class="fd" style="left:606.5px;top:265.0px"><span class="stp">STEP</span> 文件</div><div class="fd" style="left:606.5px;top:287.0px">17.5 KB</div><div style="position:absolute;left:556px;top:338.8px;width:50px;height:50px"><svg width="50" height="50" viewBox="0 0 50 50"><path d="M0 18 L34 2" stroke="#77778a" stroke-width="3"/></svg><svg style="position:absolute;left:28.3px;top:17.2px" width="21" height="20" viewBox="0 0 21 20"><path d="M0.3 4.6 L10.5 0.4 L20.7 3.2 L20.7 14.6 L10.5 19.7 L0.3 15.6 Z" fill="#c81e25"/><path d="M0.3 4.6 L10.5 0.4 L20.7 3.2 L10.5 7.6 Z" fill="#ea3b3f"/><path d="M0.3 4.6 L10.5 7.6 V19.7 L0.3 15.6 Z" fill="#dc262c"/><path d="M10.5 7.6 L20.7 3.2 V14.6 L10.5 19.7 Z" fill="#9c1217"/><text x="1.6" y="16.6" font-family="Liberation Sans,sans-serif" font-weight="bold" font-size="12.5" fill="#fff" transform="skewY(18) translate(0,-2.2)">S</text><text x="11" y="22.6" font-family="Liberation Sans,sans-serif" font-weight="bold" font-size="12.5" fill="#fff" textLength="9.2" lengthAdjust="spacingAndGlyphs" transform="skewY(-24) translate(0,-1)">W</text></svg></div><div class="fn" style="left:606.5px;top:321.1px;letter-spacing:.42px">drive shaft</div><div class="fd" style="left:606.5px;top:342.6px">SOLIDWORKS Part Document</div></div>
 <div style="position:absolute;left:921px;top:132px;width:17px;height:357px;background:#f0f0f0"></div>
 <div style="position:absolute;left:921px;top:153px;width:17px;height:141px;background:#c2c2c2"></div>
 <div style="position:absolute;left:924px;top:134px"><svg width="11" height="7" viewBox="0 0 11 7"><path d="M1 6 L5.5 1.5 L10 6" fill="none" stroke="#505050" stroke-width="1.8"/></svg></div>
 <div style="position:absolute;left:924px;top:468px"><svg width="11" height="7" viewBox="0 0 11 7"><path d="M1 1 L5.5 5.5 L10 1" fill="none" stroke="#505050" stroke-width="1.8"/></svg></div>
 <!-- bottom -->
 <div style="position:absolute;left:0;top:489px;width:940px;height:100px;background:#f0f0f0"></div>
 <div class="t" style="left:162.5px;top:509px;font-size:15.3px">文件名(N):</div>
 <div style="position:absolute;left:240px;top:503px;width:429px;height:32px;border:1px solid #7a7a7a;background:#fff"></div>
 <div class="t" style="left:245.5px;top:509.5px;font-size:15.4px">drive shaft pin.STEP</div>
 <svg style="position:absolute;left:651px;top:516px" width="13" height="8" viewBox="0 0 13 8"><path d="M1 1 L6.5 6.5 L12 1" fill="none" stroke="#444" stroke-width="1.3"/></svg>
 <div style="position:absolute;left:684px;top:503px;width:235px;height:31px;border:1px solid #adadad;background:#e1e1e1"></div>
 <div class="t" style="left:689px;top:508.5px;font-size:15.4px">All Files (*.*)</div>
 <svg style="position:absolute;left:901px;top:515px" width="13" height="8" viewBox="0 0 13 8"><path d="M1 1 L6.5 6.5 L12 1" fill="none" stroke="#444" stroke-width="1.3"/></svg>
 <div style="position:absolute;left:685px;top:543px;width:108px;height:30px;border:2px solid #0078d7;background:#e1e1e1;text-align:center;font-size:14.8px;line-height:25px">打开(O)</div>
 <div style="position:absolute;left:810px;top:543px;width:108px;height:30px;border:1px solid #adadad;background:#e1e1e1;text-align:center;font-size:14.8px;line-height:27px">取消</div>
 <svg style="position:absolute;left:926.5px;top:577.5px" width="10" height="10" viewBox="0 0 10 10"><g fill="#b8b8b8"><rect x="7" y="1" width="2" height="2"/><rect x="4" y="4" width="2" height="2"/><rect x="7" y="4" width="2" height="2"/><rect x="1" y="7" width="2" height="2"/><rect x="4" y="7" width="2" height="2"/><rect x="7" y="7" width="2" height="2"/></g></svg>
 <!-- cursor -->
 <svg style="position:absolute;left:690px;top:405px" width="12.9" height="20.2" viewBox="0 0 14 22"><path d="M1 1 V17 L4.8 13.4 L7.6 20 L10 19 L7.2 12.6 H12.4 Z" fill="#fff" stroke="#000" stroke-width="1.1"/></svg>
</div>
<!-- DIALOG END -->
</body>
</html>
